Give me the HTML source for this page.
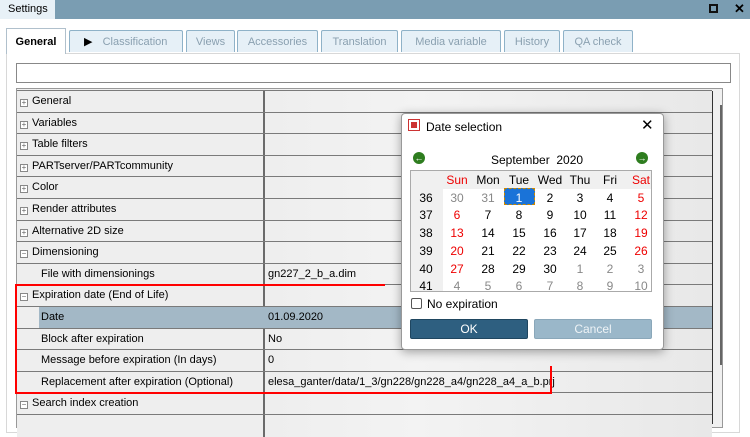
<!DOCTYPE html>
<html><head><meta charset="utf-8"><style>
*{margin:0;padding:0;box-sizing:border-box}
body{width:750px;height:424px;overflow:hidden;background:#fff;font-family:"Liberation Sans",sans-serif;font-size:11px;color:#000;position:relative}
.a{position:absolute}
.tab{position:absolute;top:30px;height:22px;border:1px solid #8fb2c8;border-bottom:none;background:#e6f0f7;color:#8aa0b0;font-size:11px;text-align:center;line-height:22px;border-radius:2px 2px 0 0}
.row{position:absolute;left:17px;width:695px;height:23px;border-top:1px solid #7a7a7a;background:linear-gradient(90deg,#eeeeee 0,#eeeeee 250px,#f3f3f3 400px,#e8e8e8 695px)}
.row .l{position:absolute;left:0;top:0;width:248px;height:22px;border-right:2px solid #6a6a6a;line-height:21px;white-space:nowrap}
.row .r{position:absolute;left:251px;top:0;line-height:21px;white-space:nowrap}
.pl{display:inline-block;width:8px;height:8px;border:1px solid #888;margin:0 4px 0 3px;font-size:8px;line-height:6px;text-align:center;color:#666;vertical-align:-1px;background:#fff}
.ind{padding-left:24px}
.cal{position:absolute;font-size:12px;text-align:center;width:26px}
.red{color:#e00}.gr{color:#888}
</style></head><body>
<div class="a" style="left:0;top:0;width:750px;height:19px;background:#7a9db2"></div>
<div class="a" style="left:0;top:0;width:55px;height:19px;background:#e8f1f7;line-height:19px;padding-left:8px;font-size:11px">Settings</div>
<div class="a" style="left:709px;top:4px;width:9px;height:9px;border:2px solid #111"></div>
<div class="a" style="left:734px;top:1px;font-size:13px;font-weight:bold">✕</div>
<div class="a" style="left:6px;top:28px;width:60px;height:26px;border:1px solid #b0c0cc;border-bottom:none;background:#fff;font-weight:bold;line-height:26px;text-align:center;font-size:11px;z-index:2">General</div>
<div class="tab" style="left:69px;width:114px"><span style="color:#000;position:absolute;left:14px">▶</span><span style="margin-left:18px">Classification</span></div>
<div class="tab" style="left:186px;width:49px">Views</div>
<div class="tab" style="left:237px;width:81px">Accessories</div>
<div class="tab" style="left:321px;width:77px">Translation</div>
<div class="tab" style="left:401px;width:100px">Media variable</div>
<div class="tab" style="left:504px;width:56px">History</div>
<div class="tab" style="left:563px;width:70px">QA check</div>
<div class="a" style="left:6px;top:53px;width:734px;height:380px;border:1px solid #d8d8d8;background:#fff"></div>
<div class="a" style="left:16px;top:63px;width:715px;height:20px;border:1px solid #888;background:#fff"></div>
<div class="a" style="left:16px;top:88px;width:707px;height:340px;border:1px solid #999;background:#f0f0f0"></div>
<div class="a" style="left:712px;top:91px;width:1px;height:333px;background:#333"></div>
<div class="a" style="left:720px;top:105px;width:2px;height:260px;background:#666"></div>
<div class="row" style="top:90px"><div class="l"><span class="pl">+</span>General</div></div>
<div class="row" style="top:112px"><div class="l"><span class="pl">+</span>Variables</div></div>
<div class="row" style="top:133px"><div class="l"><span class="pl">+</span>Table filters</div></div>
<div class="row" style="top:155px"><div class="l"><span class="pl">+</span>PARTserver/PARTcommunity</div></div>
<div class="row" style="top:176px"><div class="l"><span class="pl">+</span>Color</div></div>
<div class="row" style="top:198px"><div class="l"><span class="pl">+</span>Render attributes</div></div>
<div class="row" style="top:220px"><div class="l"><span class="pl">+</span>Alternative 2D size</div></div>
<div class="row" style="top:241px"><div class="l"><span class="pl">−</span>Dimensioning</div></div>
<div class="row" style="top:263px"><div class="l ind">File with dimensionings</div><div class="r">gn227_2_b_a.dim</div></div>
<div class="row" style="top:284px"><div class="l"><span class="pl">−</span>Expiration date (End of Life)</div></div>
<div class="row" style="top:306px;background:linear-gradient(90deg,#eeeeee 22px,#a3b8c6 22px)"><div class="l ind" style="border-right:none">Date</div><div class="r">01.09.2020</div></div>
<div class="row" style="top:328px"><div class="l ind">Block after expiration</div><div class="r">No</div></div>
<div class="row" style="top:349px"><div class="l ind">Message before expiration (In days)</div><div class="r">0</div></div>
<div class="row" style="top:371px"><div class="l ind">Replacement after expiration (Optional)</div><div class="r">elesa_ganter/data/1_3/gn228/gn228_a4/gn228_a4_a_b.prj</div></div>
<div class="row" style="top:392px"><div class="l"><span class="pl">−</span>Search index creation</div></div>
<div class="row" style="top:414px"><div class="l"></div></div>
<div class="a" style="left:15px;top:284px;width:370px;height:2px;background:#f00"></div>
<div class="a" style="left:15px;top:284px;width:2px;height:110px;background:#f00"></div>
<div class="a" style="left:15px;top:392px;width:537px;height:2px;background:#f00"></div>
<div class="a" style="left:550px;top:366px;width:2px;height:28px;background:#f00"></div>
<div class="a" style="left:401px;top:113px;width:263px;height:237px;background:#fff;border:1px solid #999;border-radius:4px;box-shadow:0 2px 10px rgba(0,0,0,.35)"></div>
<div class="a" style="left:408px;top:119px;width:12px;height:12px;border:1px solid #c33;background:#fff"><div class="a" style="left:2px;top:2px;width:6px;height:6px;background:#c33"></div></div>
<div class="a" style="left:426px;top:120px;font-size:12px">Date selection</div>
<div class="a" style="left:641px;top:116px;font-size:15px">✕</div>
<div class="a" style="left:413px;top:152px;width:12px;height:12px;border-radius:50%;background:#2e7d1f;color:#fff;font-size:9px;line-height:12px;text-align:center;font-weight:bold">←</div>
<div class="a" style="left:636px;top:152px;width:12px;height:12px;border-radius:50%;background:#2e7d1f;color:#fff;font-size:9px;line-height:12px;text-align:center;font-weight:bold">→</div>
<div class="a" style="left:491px;top:153px;font-size:12px">September&nbsp; 2020</div>
<div class="a" style="left:410px;top:170px;width:242px;height:122px;border:1px solid #aaa;background:#fff;overflow:hidden"><div class="a" style="left:0;top:0;width:32px;height:122px;background:#f0f0f0"></div><div class="a" style="left:0;top:0;width:242px;height:18px;background:#f0f0f0"></div></div>
<div class="a" style="left:504px;top:188px;width:31px;height:17px;background:#1a73d8;border:1px dashed #c80"></div>
<div class="cal red" style="left:444px;top:173px">Sun</div><div class="cal" style="left:475px;top:173px">Mon</div><div class="cal" style="left:506px;top:173px">Tue</div><div class="cal" style="left:537px;top:173px">Wed</div><div class="cal" style="left:567px;top:173px">Thu</div><div class="cal" style="left:597px;top:173px">Fri</div><div class="cal red" style="left:628px;top:173px">Sat</div>
<div class="cal" style="left:413px;top:191px">36</div><div class="cal gr" style="left:444px;top:191px">30</div><div class="cal gr" style="left:475px;top:191px">31</div><div class="cal" style="left:506px;top:191px;color:#fff">1</div><div class="cal" style="left:537px;top:191px">2</div><div class="cal" style="left:567px;top:191px">3</div><div class="cal" style="left:597px;top:191px">4</div><div class="cal red" style="left:628px;top:191px">5</div>
<div class="cal" style="left:413px;top:208px">37</div><div class="cal red" style="left:444px;top:208px">6</div><div class="cal" style="left:475px;top:208px">7</div><div class="cal" style="left:506px;top:208px">8</div><div class="cal" style="left:537px;top:208px">9</div><div class="cal" style="left:567px;top:208px">10</div><div class="cal" style="left:597px;top:208px">11</div><div class="cal red" style="left:628px;top:208px">12</div>
<div class="cal" style="left:413px;top:226px">38</div><div class="cal red" style="left:444px;top:226px">13</div><div class="cal" style="left:475px;top:226px">14</div><div class="cal" style="left:506px;top:226px">15</div><div class="cal" style="left:537px;top:226px">16</div><div class="cal" style="left:567px;top:226px">17</div><div class="cal" style="left:597px;top:226px">18</div><div class="cal red" style="left:628px;top:226px">19</div>
<div class="cal" style="left:413px;top:244px">39</div><div class="cal red" style="left:444px;top:244px">20</div><div class="cal" style="left:475px;top:244px">21</div><div class="cal" style="left:506px;top:244px">22</div><div class="cal" style="left:537px;top:244px">23</div><div class="cal" style="left:567px;top:244px">24</div><div class="cal" style="left:597px;top:244px">25</div><div class="cal red" style="left:628px;top:244px">26</div>
<div class="cal" style="left:413px;top:262px">40</div><div class="cal red" style="left:444px;top:262px">27</div><div class="cal" style="left:475px;top:262px">28</div><div class="cal" style="left:506px;top:262px">29</div><div class="cal" style="left:537px;top:262px">30</div><div class="cal gr" style="left:567px;top:262px">1</div><div class="cal gr" style="left:597px;top:262px">2</div><div class="cal gr" style="left:628px;top:262px">3</div>
<div class="cal" style="left:413px;top:279px">41</div><div class="cal gr" style="left:444px;top:279px">4</div><div class="cal gr" style="left:475px;top:279px">5</div><div class="cal gr" style="left:506px;top:279px">6</div><div class="cal gr" style="left:537px;top:279px">7</div><div class="cal gr" style="left:567px;top:279px">8</div><div class="cal gr" style="left:597px;top:279px">9</div><div class="cal gr" style="left:628px;top:279px">10</div>
<div class="a" style="left:411px;top:298px;width:11px;height:11px;border:1px solid #555;border-radius:2px;background:#fff"></div>
<div class="a" style="left:427px;top:297px;font-size:12px">No expiration</div>
<div class="a" style="left:410px;top:319px;width:118px;height:20px;background:#2e5f80;border:1px solid #1f4660;border-radius:2px;color:#fff;text-align:center;line-height:18px;font-size:12px">OK</div>
<div class="a" style="left:534px;top:319px;width:118px;height:20px;background:#9ab7c9;border:1px solid #8aa7b9;border-radius:2px;color:#eef3f6;text-align:center;line-height:18px;font-size:12px">Cancel</div>
</body></html>
